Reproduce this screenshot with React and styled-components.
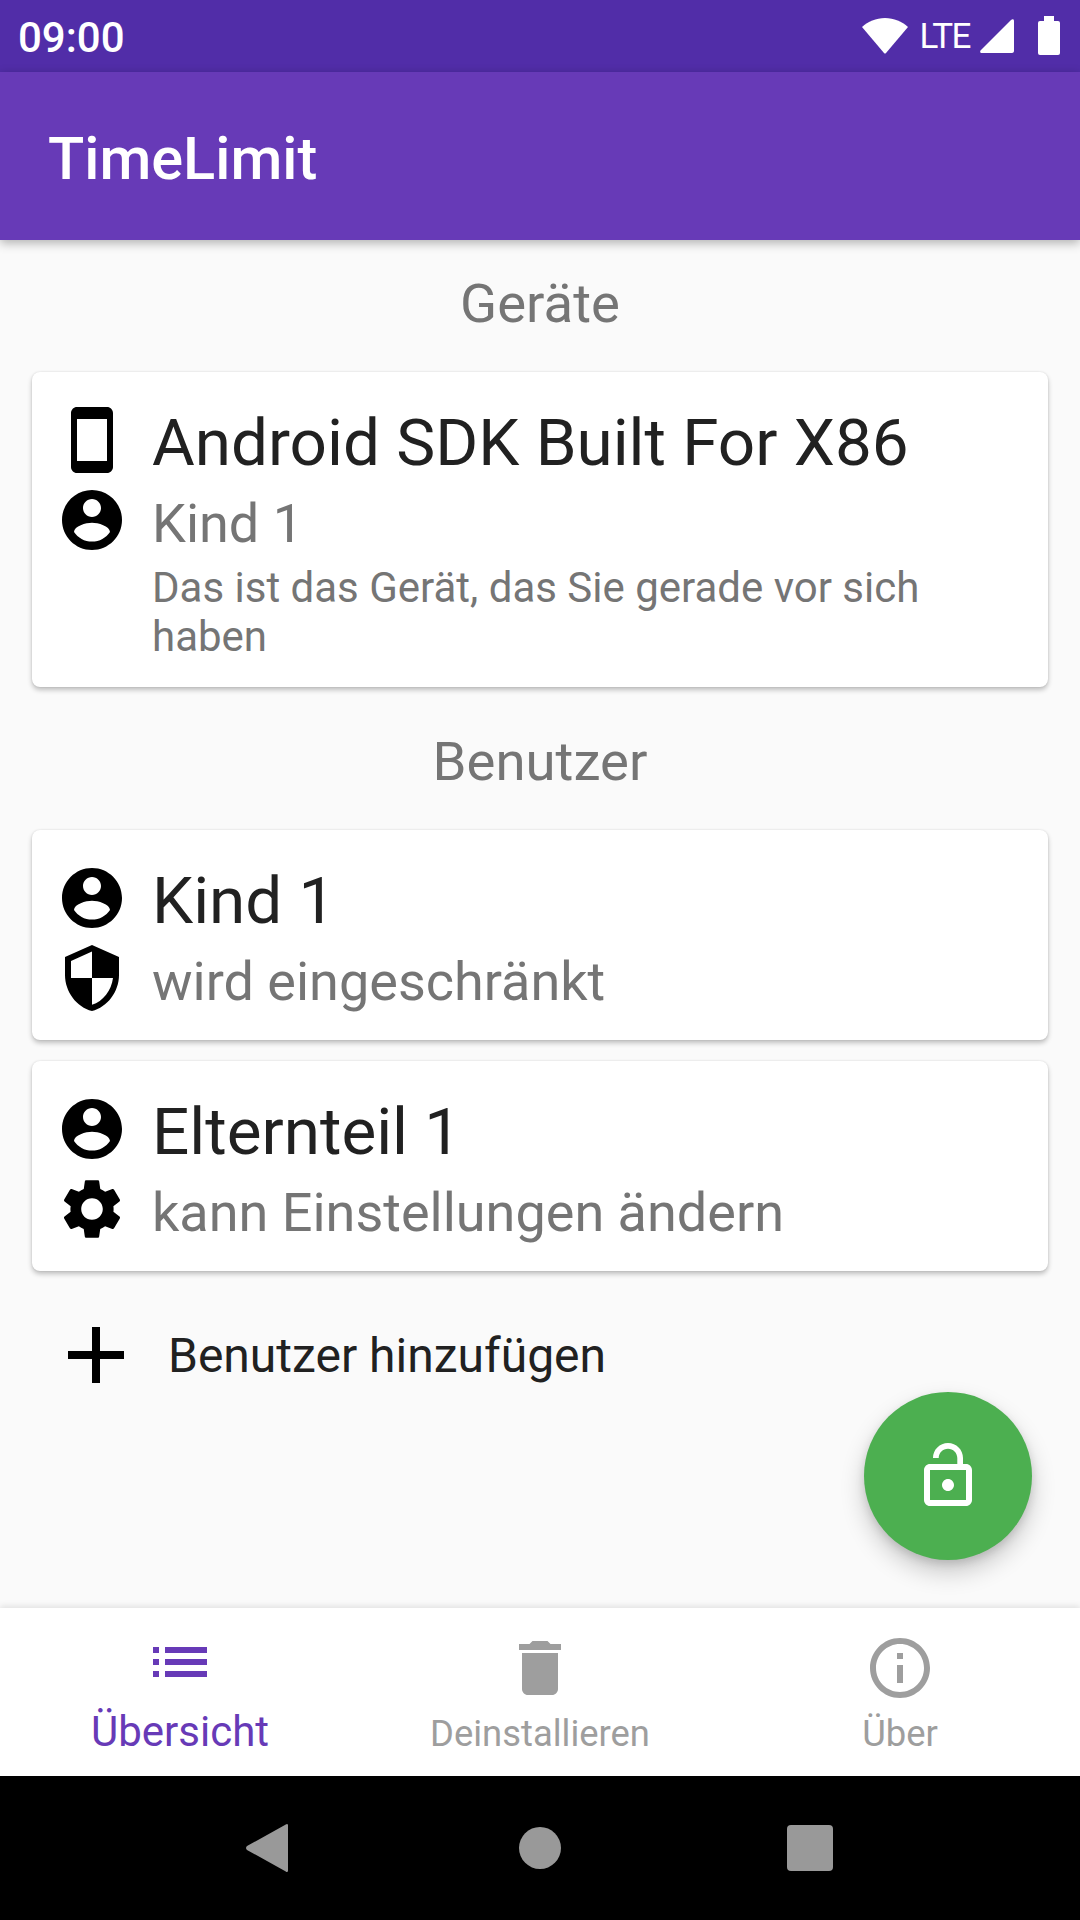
import styled, { createGlobalStyle } from "styled-components";

const GlobalStyle = createGlobalStyle`
  html, body { margin: 0; padding: 0; }
  body { font-family: Roboto, "Liberation Sans", sans-serif; background: #fafafa; }
`;

const icons = {
  phone: "M17 1.01L7 1c-1.1 0-2 .9-2 2v18c0 1.1.9 2 2 2h10c1.1 0 2-.9 2-2V3c0-1.1-.9-1.99-2-1.99zM17 19H7V5h10v14z",
  person: "M12 2C6.48 2 2 6.48 2 12s4.48 10 10 10 10-4.48 10-10S17.52 2 12 2zm0 3c1.66 0 3 1.34 3 3s-1.34 3-3 3-3-1.34-3-3 1.34-3 3-3zm0 14.2c-2.5 0-4.71-1.28-6-3.22.03-1.99 4-3.08 6-3.08 1.99 0 5.97 1.09 6 3.08-1.29 1.94-3.5 3.22-6 3.22z",
  shield: "M12 1L3 5v6c0 5.55 3.84 10.74 9 12 5.16-1.26 9-6.45 9-12V5l-9-4zm0 10.99h7c-.53 4.12-3.28 7.79-7 8.94V12H5V6.3l7-3.11v8.8z",
  gear: "M19.14 12.94c.04-.3.06-.61.06-.94 0-.32-.02-.64-.07-.94l2.03-1.58c.18-.14.23-.41.12-.61l-1.92-3.32c-.12-.22-.37-.29-.59-.22l-2.39.96c-.5-.38-1.03-.7-1.62-.94l-.36-2.54c-.04-.24-.24-.41-.48-.41h-3.84c-.24 0-.43.17-.47.41l-.36 2.54c-.59.24-1.13.57-1.62.94l-2.39-.96c-.22-.08-.47 0-.59.22L2.74 8.87c-.12.21-.08.47.12.61l2.03 1.58c-.05.3-.09.63-.09.94s.02.64.07.94l-2.03 1.58c-.18.14-.23.41-.12.61l1.92 3.32c.12.22.37.29.59.22l2.39-.96c.5.38 1.03.7 1.62.94l.36 2.54c.05.24.24.41.48.41h3.84c.24 0 .44-.17.47-.41l.36-2.54c.59-.24 1.13-.56 1.62-.94l2.39.96c.22.08.47 0 .59-.22l1.92-3.32c.12-.22.07-.47-.12-.61l-2.01-1.58zM12 15.6c-1.98 0-3.6-1.62-3.6-3.6s1.62-3.6 3.6-3.6 3.6 1.62 3.6 3.6-1.62 3.6-3.6 3.6z",
  plus: "M19 13h-6v6h-2v-6H5v-2h6V5h2v6h6v2z",
  lockOpen: "M12 17c1.1 0 2-.9 2-2s-.9-2-2-2-2 .9-2 2 .9 2 2 2zm6-9h-1V6c0-2.76-2.24-5-5-5S7 3.24 7 6h1.9c0-1.71 1.39-3.1 3.1-3.1 1.71 0 3.1 1.39 3.1 3.1v2H6c-1.1 0-2 .9-2 2v10c0 1.1.9 2 2 2h12c1.1 0 2-.9 2-2V10c0-1.1-.9-2-2-2zm0 12H6V10h12v10z",
  list: "M3 13h2v-2H3v2zm0 4h2v-2H3v2zm0-8h2V7H3v2zm4 4h14v-2H7v2zm0 4h14v-2H7v2zM7 7v2h14V7H7z",
  trash: "M6 19c0 1.1.9 2 2 2h8c1.1 0 2-.9 2-2V7H6v12zM19 4h-3.5l-1-1h-5l-1 1H5v2h14V4z",
  info: "M11 7h2v2h-2zm0 4h2v6h-2zm1-9C6.48 2 2 6.48 2 12s4.48 10 10 10 10-4.48 10-10S17.52 2 12 2zm0 18c-4.41 0-8-3.59-8-8s3.59-8 8-8 8 3.59 8 8-3.59 8-8 8z",
};

const Icon = ({ name, size = 72, color = "#000" }) => (
  <svg width={size} height={size} viewBox="0 0 24 24" fill={color} style={{ display: "block" }}>
    <path d={icons[name]} />
  </svg>
);

const cards = [
  { icons: ["person", "shield"], title: "Kind 1", sub: "wird eingeschränkt" },
  { icons: ["person", "gear"], title: "Elternteil 1", sub: "kann Einstellungen ändern" },
];

const tabs = [
  { icon: "list", label: "Übersicht", active: true },
  { icon: "trash", label: "Deinstallieren" },
  { icon: "info", label: "Über" },
];

export default function App() {
  return (
    <Screen>
      <GlobalStyle />
      <StatusBar>
        <Clock>09:00</Clock>
        <StatusIcons>
          <svg width="46" height="36" viewBox="0 0 46 36" fill="#fff">
            <path d="M0 9C6 3.500 14 0 23 0s17 3.500 23 9L24 35c-.6.700-1.400.700-2 0z" />
          </svg>
          <Lte>LTE</Lte>
          <svg width="34" height="34" viewBox="0 0 34 34" fill="#fff">
            <path d="M34 2v30c0 1-1 2-2 2H2c-2 0-2.500-1.500-1-3L31 1c1.500-1.500 3-1 3 1z" />
          </svg>
          <Battery />
        </StatusIcons>
      </StatusBar>
      <Toolbar>TimeLimit</Toolbar>
      <Main>
        <Heading>Geräte</Heading>
        <Card>
          <IconColumn>
            <Icon name="phone" />
            <Icon name="person" />
          </IconColumn>
          <TextColumn>
            <CardTitle>Android SDK Built For X86</CardTitle>
            <CardSub>Kind 1</CardSub>
            <CardNote>Das ist das Gerät, das Sie gerade vor sich haben</CardNote>
          </TextColumn>
        </Card>
        <Heading $second>Benutzer</Heading>
        <CardList>
          {cards.map((c) => (
            <Card key={c.title}>
              <IconColumn>
                <Icon name={c.icons[0]} />
                <Icon name={c.icons[1]} />
              </IconColumn>
              <TextColumn>
                <CardTitle>{c.title}</CardTitle>
                <CardSub>{c.sub}</CardSub>
              </TextColumn>
            </Card>
          ))}
        </CardList>
        <AddRow>
          <Icon name="plus" size={96} />
          <AddLabel>Benutzer hinzufügen</AddLabel>
        </AddRow>
        <Fab>
          <Icon name="lockOpen" color="#fff" />
        </Fab>
      </Main>
      <BottomNav>
        {tabs.map((t) => (
          <Tab key={t.label} $active={t.active}>
            <Icon name={t.icon} color={t.active ? "#673ab7" : "#9e9e9e"} />
            <TabLabel $active={t.active}>{t.label}</TabLabel>
          </Tab>
        ))}
      </BottomNav>
      <NavBar>
        <svg width="42" height="48" viewBox="0 0 42 48" fill="#999">
          <path d="M41 0c.6 0 1 .6 1 1.500v45c0 .9-.4 1.500-1 1.500-.4 0-.8-.2-1.200-.6L1 26c-1.300-1.200-1.300-2.800 0-4L39.800.6c.4-.4.8-.6 1.200-.6z" />
        </svg>
        <HomeButton />
        <RecentsButton />
      </NavBar>
    </Screen>
  );
}

const Screen = styled.div`
  width: 1080px;
  height: 1920px;
  display: flex;
  flex-direction: column;
  overflow: hidden;
  background: #fafafa;
`;
const StatusBar = styled.div`
  height: 72px;
  flex: none;
  background: #512da8;
  display: flex;
  align-items: center;
  justify-content: space-between;
  padding: 0 20px 0 18px;
  box-sizing: border-box;
`;
const Clock = styled.span`
  color: #fff;
  font-size: 42px;
  font-weight: 500;
  position: relative;
  top: 1px;
`;
const StatusIcons = styled.div`
  display: flex;
  align-items: center;
  svg { display: block; }
`;
const Lte = styled.span`
  color: #fff;
  font-size: 35px;
  font-weight: 400;
  letter-spacing: -1.5px;
  margin: 0 10px 0 12px;
`;
const Battery = styled.div`
  width: 22px;
  height: 34px;
  margin-left: 24px;
  margin-top: 4px;
  background: #fff;
  border-radius: 2px;
  position: relative;
  &::before {
    content: "";
    position: absolute;
    top: -5px;
    left: 6px;
    width: 10px;
    height: 5px;
    background: #fff;
  }
`;
const Toolbar = styled.div`
  height: 168px;
  flex: none;
  box-sizing: border-box;
  background: #673ab7;
  color: #fff;
  font-size: 59.5px;
  font-weight: 500;
  line-height: 174px;
  padding-left: 48px;
  box-shadow: 0 3px 10px rgba(0, 0, 0, 0.3);
  position: relative;
  z-index: 1;
`;
const Main = styled.div`
  flex: 1;
  position: relative;
  padding: 0 32px;
`;
const Heading = styled.div`
  font-size: 54.5px;
  line-height: 62px;
  color: #757575;
  text-align: center;
  padding-top: ${(p) => (p.$second ? "43px" : "32px")};
  padding-bottom: 38px;
`;
const CardList = styled.div`
  display: flex;
  flex-direction: column;
  gap: 21px;
`;
const Card = styled.div`
  display: flex;
  gap: 24px;
  padding: 32px 24px 26px;
  background: #fff;
  border-radius: 8px;
  box-shadow: 0 3px 5px rgba(0, 0, 0, 0.24), 0 0 2px rgba(0, 0, 0, 0.12);
`;
const IconColumn = styled.div`
  display: flex;
  flex-direction: column;
  gap: 8px;
  flex: none;
`;
const TextColumn = styled.div`
  display: flex;
  flex-direction: column;
  padding-top: 2px;
`;
const CardTitle = styled.div`
  font-size: 65.6px;
  line-height: 74px;
  color: #212121;
`;
const CardSub = styled.div`
  font-size: 54px;
  line-height: 62px;
  color: #757575;
  margin-top: 13px;
`;
const CardNote = styled.div`
  font-size: 42px;
  line-height: 49px;
  color: #757575;
  margin-top: 8px;
`;
const AddRow = styled.div`
  display: flex;
  align-items: center;
  gap: 24px;
  margin-top: 36px;
  padding-left: 16px;
`;
const AddLabel = styled.span`
  font-size: 48px;
  color: #212121;
`;
const Fab = styled.div`
  position: absolute;
  left: 864px;
  top: 1152px;
  width: 168px;
  height: 168px;
  border-radius: 50%;
  background: #4caf50;
  display: flex;
  align-items: center;
  justify-content: center;
  box-shadow: 0 12px 24px rgba(0, 0, 0, 0.2), 0 4px 8px rgba(0, 0, 0, 0.12);
`;
const BottomNav = styled.div`
  height: 168px;
  flex: none;
  background: #fff;
  display: grid;
  grid-template-columns: repeat(3, 1fr);
  box-shadow: 0 -2px 6px rgba(0, 0, 0, 0.1);
  position: relative;
`;
const Tab = styled.div`
  display: flex;
  flex-direction: column;
  align-items: center;
  padding-top: ${(p) => (p.$active ? "18px" : "24px")};
`;
const TabLabel = styled.span`
  font-size: ${(p) => (p.$active ? "42px" : "36.4px")};
  color: ${(p) => (p.$active ? "#673ab7" : "#9e9e9e")};
  margin-top: ${(p) => (p.$active ? "9px" : "8px")};
`;
const NavBar = styled.div`
  height: 144px;
  flex: none;
  background: #000;
  display: flex;
  align-items: center;
  justify-content: center;
  gap: 231px;
  padding-right: 2px;
`;
const HomeButton = styled.div`
  width: 42px;
  height: 42px;
  border-radius: 50%;
  background: #999;
`;
const RecentsButton = styled.div`
  width: 46px;
  height: 46px;
  margin-left: -5px;
  border-radius: 4px;
  background: #999;
`;
